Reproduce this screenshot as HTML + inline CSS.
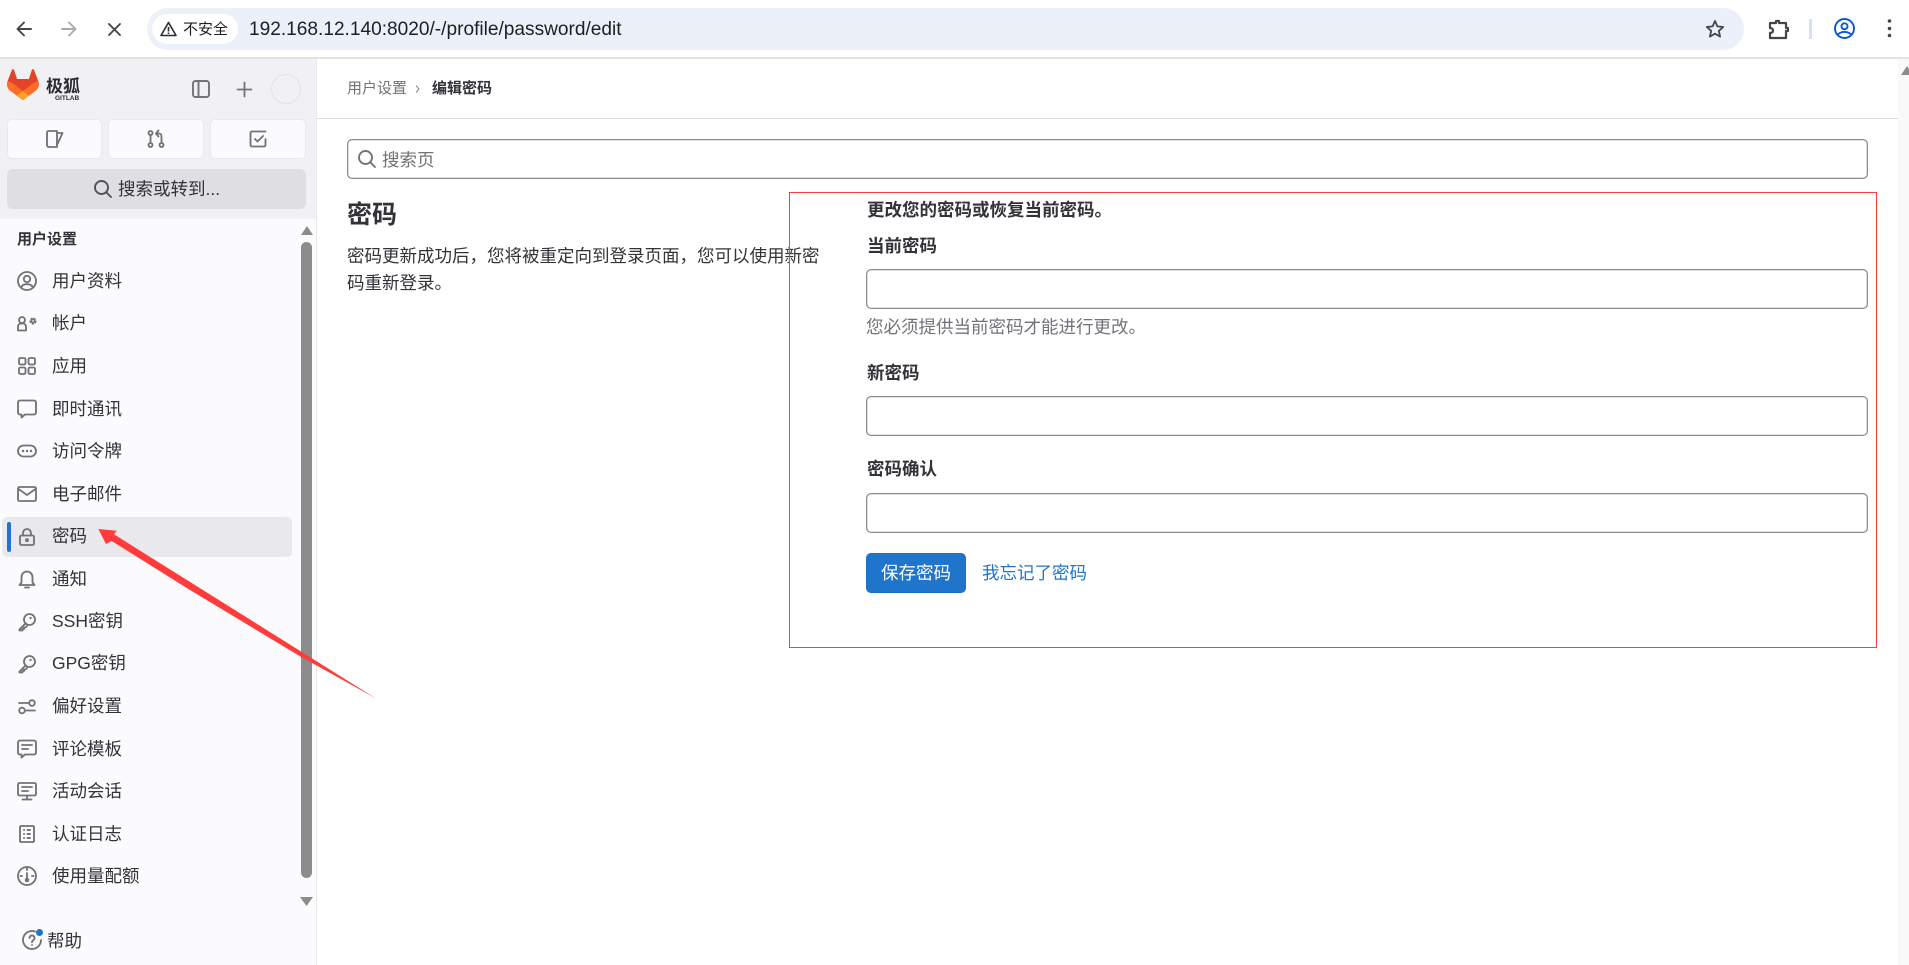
<!DOCTYPE html>
<html lang="zh"><head><meta charset="utf-8"><title>密码</title>
<style>
*{box-sizing:border-box}
html,body{margin:0;padding:0;width:1909px;height:965px;overflow:hidden;background:#fff}
body{font-family:"Liberation Sans","Noto Sans CJK SC",sans-serif;color:#333238;font-size:17.5px;position:relative}
.a{position:absolute}
.t{position:absolute;line-height:24px;height:24px;white-space:nowrap}
.b{font-weight:700}
svg{position:absolute;display:block;overflow:visible}
.ic{width:20px;height:20px;left:17px;fill:none;stroke:#737278;stroke-width:1.85;stroke-linecap:round;stroke-linejoin:round}
.tb{fill:none;stroke:#444746;stroke-width:1.9;stroke-linecap:round;stroke-linejoin:round}
.input{position:absolute;border-radius:5px;background:#fff;box-shadow:inset 0 0 0 1.3px #8c8b90}
.qb{position:absolute;top:119px;height:40px;background:#fbfafd;border:1px solid #e9e9ec;border-radius:5px}
</style></head><body>

<!-- browser toolbar -->
<div class="a" style="left:0;top:57px;width:1909px;height:2px;background:#e3e3e3"></div>
<svg class="tb" style="left:16px;top:21px;width:16px;height:16px" viewBox="0 0 16 16"><path d="M15 8H1.500M8 1.500 1.500 8 8 14.500"/></svg>
<svg class="tb" style="left:61px;top:21px;width:16px;height:16px;stroke:#a8abae" viewBox="0 0 16 16"><path d="M1 8h13.500M8 1.500 14.500 8 8 14.500"/></svg>
<svg class="tb" style="left:108px;top:23px;width:13px;height:13px" viewBox="0 0 13 13"><path d="M1 1l11 11M12 1 1 12"/></svg>
<div class="a" style="left:147px;top:8px;width:1597px;height:42px;border-radius:21px;background:#ebf0f9"></div>
<div class="a" style="left:152px;top:14px;width:86px;height:30px;border-radius:15px;background:#fff"></div>
<svg style="left:160px;top:21px;width:17px;height:16px;fill:none;stroke:#2b2b2b;stroke-width:1.6;stroke-linejoin:round" viewBox="0 0 17 16"><path d="M8.500 1.500 16 14.500H1z"/><path d="M8.500 6v4.500M8.500 11.500v1.500"/></svg>
<div class="t" style="left:183px;top:18px;font-size:15px;color:#1f1f1f">不安全</div>
<div class="t" style="left:249px;top:18px;font-size:19.1px;color:#1f1f1f">192.168.12.140:8020/-/profile/password/edit</div>
<svg style="left:1705px;top:19px;width:20px;height:20px;fill:none;stroke:#444746;stroke-width:1.8;stroke-linejoin:round" viewBox="0 0 20 20"><path d="M10 2l2.400 5.400 5.800.6-4.400 3.900 1.300 5.700L10 14.700l-5.100 2.900 1.300-5.700L1.800 8l5.800-.6z"/></svg>
<svg style="left:1768px;top:19px;width:21px;height:20px;fill:none;stroke:#444746;stroke-width:2.2;stroke-linejoin:round" viewBox="0 0 21 20"><path d="M2 4H8V2h3V4H18V9h2v3h-2V19H2V14c2.500 0 3-1.500 3-2.500S4.500 9 2 9Z"/></svg>
<div class="a" style="left:1809px;top:19px;width:3px;height:20px;background:#d3e3fd"></div>
<svg style="left:1834px;top:18px;width:21px;height:21px;fill:none;stroke:#0b57d0;stroke-width:1.9" viewBox="0 0 21 21"><circle cx="10.500" cy="10.500" r="9.500"/><circle cx="10.500" cy="8.300" r="3"/><path d="M3.800 16.500c2-2 4.300-2.600 6.700-2.600s4.700.6 6.700 2.600"/></svg>
<svg style="left:1886px;top:19px;width:7px;height:20px;fill:#444746" viewBox="0 0 7 20"><circle cx="3.500" cy="2" r="1.800"/><circle cx="3.500" cy="9.500" r="1.800"/><circle cx="3.500" cy="16.500" r="1.800"/></svg>

<!-- sidebar -->
<div class="a" style="left:0;top:59px;width:317px;height:906px;background:#fbfafd;border-right:1px solid #e8e8ea"></div>
<div class="a" style="left:0;top:59px;width:316px;height:160px;background:#f1f1f4"></div>
<svg style="left:7px;top:69px;width:32px;height:31px" viewBox="0 0 25 24"><path fill="#E24329" d="m24.507 9.500-.034-.09L21.082.562a.896.896 0 0 0-1.694.091l-2.290 7.010H7.825L5.535.653a.898.898 0 0 0-1.694-.09L.451 9.411.416 9.500a6.297 6.297 0 0 0 2.090 7.278l.012.01.03.022 5.160 3.867 2.560 1.935 1.554 1.176a1.051 1.051 0 0 0 1.268 0l1.555-1.176 2.560-1.935 5.197-3.890.014-.01A6.297 6.297 0 0 0 24.507 9.500Z"/><path fill="#FC6D26" d="m24.507 9.500-.034-.09a11.440 11.440 0 0 0-4.560 2.051l-7.447 5.632 4.742 3.584 5.197-3.890.014-.01A6.297 6.297 0 0 0 24.507 9.500Z"/><path fill="#FCA326" d="m7.707 20.677 2.560 1.935 1.555 1.176a1.051 1.051 0 0 0 1.268 0l1.555-1.176 2.560-1.935-4.743-3.584-4.755 3.584Z"/><path fill="#FC6D26" d="M5.010 11.461a11.430 11.430 0 0 0-4.560-2.050L.416 9.500a6.297 6.297 0 0 0 2.090 7.278l.012.01.03.022 5.160 3.867 4.745-3.584-7.444-5.632Z"/></svg>
<div class="t b" style="left:46px;top:75px;font-size:17px;color:#2b2b33">极狐</div>
<div class="t b" style="left:55px;top:87px;font-size:6.500px;color:#2b2b33">GITLAB</div>
<svg class="ic" style="left:192px;top:80px;width:18px;height:18px;stroke-width:1.9" viewBox="0 0 18 18"><rect x="1" y="1" width="16" height="16" rx="2.500"/><path d="M6.500 1v16"/></svg>
<svg class="ic" style="left:237px;top:82px;width:15px;height:15px;stroke-width:1.8" viewBox="0 0 15 15"><path d="M7.500 .5v14M.5 7.500h14"/></svg>
<div class="a" style="left:271px;top:74px;width:30px;height:30px;border-radius:50%;border:1px solid #e3e3e6;background:#f1f1f4"></div>
<div class="qb" style="left:7px;width:95px"></div>
<div class="qb" style="left:108px;width:96px"></div>
<div class="qb" style="left:210px;width:96px"></div>
<svg class="ic" style="left:45px;top:129px" viewBox="0 0 20 20"><path d="M2 3.500a1.500 1.500 0 0 1 1.500-1.500H12v16H4a2 2 0 0 1-2-2z"/><path d="M12 4h5.500L12 16"/></svg>
<svg class="ic" style="left:146px;top:129px" viewBox="0 0 20 20"><circle cx="4.500" cy="4" r="2"/><circle cx="4.500" cy="16" r="2"/><path d="M4.500 6v8"/><circle cx="15.500" cy="16" r="2"/><path d="M15.500 14V7a2.500 2.500 0 0 0-2.500-2.500h-2.500M12.500 1.500l-2.500 3 2.500 3"/></svg>
<svg class="ic" style="left:248px;top:129px" viewBox="0 0 20 20"><path d="M17.500 10v6a1.500 1.500 0 0 1-1.500 1.500H4A1.500 1.500 0 0 1 2.500 16V4A1.500 1.500 0 0 1 4 2.500h13.500"/><path d="M7 10l2.500 2.500L15 7"/></svg>
<div class="a" style="left:7px;top:169px;width:299px;height:40px;background:#dfdee3;border-radius:6px"></div>
<svg style="left:94px;top:180px;width:18px;height:18px;fill:none;stroke:#535158;stroke-width:1.9;stroke-linecap:round" viewBox="0 0 18 18"><circle cx="7.500" cy="7.500" r="6.500"/><path d="M12.500 12.500 17 17"/></svg>
<div class="t" style="left:118px;top:177px">搜索或转到...</div>

<div class="t b" style="left:17px;top:228px;font-size:15px">用户设置</div>

<div class="a" style="left:2px;top:517px;width:290px;height:40px;background:#e9e8ec;border-radius:5px"></div>
<div class="a" style="left:7px;top:522px;width:4px;height:30px;background:#1f75cb;border-radius:2px"></div>

<svg class="ic" style="top:271px" viewBox="0 0 20 20"><circle cx="10" cy="10" r="9"/><circle cx="10" cy="8" r="3.200"/><path d="M4.200 16.500c.8-2.500 3-3.300 5.800-3.300s5 .8 5.800 3.300"/></svg>
<div class="t" style="left:52px;top:269px">用户资料</div>
<svg class="ic" style="top:313px" viewBox="0 0 20 20"><circle cx="5" cy="7" r="3"/><path d="M1 17.500v-4a3 3 0 0 1 3-3h2a3 3 0 0 1 3 3v4z"/><circle cx="16" cy="8" r="2.500" fill="#737278" stroke-width="2.200" stroke-dasharray="2 1" stroke-linecap="butt"/><circle cx="16" cy="8" r=".9" fill="#fbfafd" stroke="none"/></svg>
<div class="t" style="left:52px;top:311px">帐户</div>
<svg class="ic" style="top:356px" viewBox="0 0 20 20"><rect x="2" y="2" width="6.500" height="6.500" rx="1.500"/><rect x="11.500" y="2" width="6.500" height="6.500" rx="1.500"/><rect x="2" y="11.500" width="6.500" height="6.500" rx="1.500"/><rect x="11.500" y="11.500" width="6.500" height="6.500" rx="1.500"/></svg>
<div class="t" style="left:52px;top:354px">应用</div>
<svg class="ic" style="top:399px" viewBox="0 0 20 20"><path d="M3 1.500h14a2 2 0 0 1 2 2v10a2 2 0 0 1-2 2H8l-3.500 3v-3H3a2 2 0 0 1-2-2v-10a2 2 0 0 1 2-2z"/></svg>
<div class="t" style="left:52px;top:397px">即时通讯</div>
<svg class="ic" style="top:441px" viewBox="0 0 20 20"><rect x="1" y="4.500" width="18" height="11" rx="5.500"/><path d="M6 10h.1M10 10h.1M14 10h.1" stroke-width="2.400"/></svg>
<div class="t" style="left:52px;top:439px">访问令牌</div>
<svg class="ic" style="top:484px" viewBox="0 0 20 20"><rect x="1" y="3" width="18" height="14" rx="1.500"/><path d="M1.500 5 10 11l8.500-6"/></svg>
<div class="t" style="left:52px;top:482px">电子邮件</div>
<svg class="ic" style="top:527px" viewBox="0 0 20 20"><rect x="3" y="8.500" width="14" height="9.500" rx="1.500"/><path d="M6 8.500V6a4 4 0 0 1 8 0v2.500"/><circle cx="10" cy="13.200" r="1" fill="#737278"/></svg>
<div class="t" style="left:52px;top:524px">密码</div>
<svg class="ic" style="top:569px" viewBox="0 0 20 20"><path d="M2.500 16h15l-2-2.500V8a5.500 5.500 0 0 0-11 0v5.500z"/><path d="M8 18.500h4"/></svg>
<div class="t" style="left:52px;top:567px">通知</div>
<svg class="ic" style="top:612px" viewBox="0 0 20 20"><circle cx="12.500" cy="7.500" r="5.500"/><path d="M8.500 11.500 2.500 17.500v1h3V17h1.500v-1.500h1.500l1.500-1.500"/><path d="M13.500 6h.1" stroke-width="2.200"/></svg>
<div class="t" style="left:52px;top:609px">SSH密钥</div>
<svg class="ic" style="top:654px" viewBox="0 0 20 20"><circle cx="12.500" cy="7.500" r="5.500"/><path d="M8.500 11.500 2.500 17.500v1h3V17h1.500v-1.500h1.500l1.500-1.500"/><path d="M13.500 6h.1" stroke-width="2.200"/></svg>
<div class="t" style="left:52px;top:651px">GPG密钥</div>
<svg class="ic" style="top:696px" viewBox="0 0 20 20"><path d="M2 7h10M9 14.500h9"/><circle cx="15" cy="7" r="2.800"/><circle cx="5" cy="14.500" r="2.800"/></svg>
<div class="t" style="left:52px;top:694px">偏好设置</div>
<svg class="ic" style="top:739px" viewBox="0 0 20 20"><path d="M3 1.500h14a2 2 0 0 1 2 2v10a2 2 0 0 1-2 2H8l-3.500 3v-3H3a2 2 0 0 1-2-2v-10a2 2 0 0 1 2-2z"/><path d="M5 6h10M5 10h6"/></svg>
<div class="t" style="left:52px;top:737px">评论模板</div>
<svg class="ic" style="top:781px" viewBox="0 0 20 20"><rect x="1" y="2" width="18" height="12.500" rx="1.500"/><path d="M5 6h10M5 10h6M10 14.500V18M5.500 18.500h9"/></svg>
<div class="t" style="left:52px;top:779px">活动会话</div>
<svg class="ic" style="top:824px" viewBox="0 0 20 20"><rect x="3" y="2" width="14" height="16" rx="1"/><path d="M7 6h.1M10.500 6H13M7 10h.1M10.500 10H13M7 14h.1M10.500 14H13" stroke-width="1.900"/></svg>
<div class="t" style="left:52px;top:822px">认证日志</div>
<svg class="ic" style="top:866px" viewBox="0 0 20 20"><circle cx="10" cy="10" r="9"/><path d="M10 1.500V4M3.500 10H5M16.500 10H15M10 7v6"/><circle cx="10" cy="14" r="1.300" fill="#737278"/></svg>
<div class="t" style="left:52px;top:864px">使用量配额</div>

<svg class="ic" style="left:22px;top:930px" viewBox="0 0 20 20"><path d="M13 1.500A9 9 0 1 0 19 10"/><path d="M7.500 8a2.500 2.500 0 1 1 4 2c-1 .7-1.500 1.200-1.500 2.200M10 15h.1"/></svg>
<div class="a" style="left:36px;top:929px;width:7px;height:7px;border-radius:50%;background:#1f75cb"></div>
<div class="t" style="left:47px;top:929px">帮助</div>

<!-- sidebar scrollbar -->
<div class="a" style="left:301px;top:242px;width:11px;height:636px;background:#8c8c8c;border-radius:5.500px"></div>
<svg style="left:301px;top:226px;width:12px;height:9px;fill:#8c8c8c" viewBox="0 0 12 9"><path d="M6 0l6 9H0z"/></svg>
<svg style="left:300px;top:897px;width:13px;height:9px;fill:#8c8c8c" viewBox="0 0 13 9"><path d="M0 0h13L6.500 9z"/></svg>

<!-- top bar -->
<div class="a" style="left:317px;top:118px;width:1581px;height:1px;background:#dcdcde"></div>
<div class="a" style="left:1898px;top:59px;width:11px;height:906px;background:#f9f9f9"></div>
<svg style="left:1901px;top:66px;width:8px;height:9px;fill:#8c8c8c;overflow:hidden" viewBox="0 0 8 9"><path d="M6 0l6 9H0z"/></svg>
<div class="t" style="left:347px;top:77px;font-size:15px;color:#737278">用户设置</div>
<svg style="left:415px;top:85px;width:5px;height:8px;fill:none;stroke:#89888d;stroke-width:1" viewBox="0 0 5 8"><path d="M1 .5l3 3.500-3 3.500"/></svg>
<div class="t b" style="left:432px;top:77px;font-size:15px">编辑密码</div>

<!-- search -->
<div class="input" style="left:347px;top:139px;width:1521px;height:40px"></div>
<svg style="left:358px;top:150px;width:18px;height:18px;fill:none;stroke:#737278;stroke-width:1.9;stroke-linecap:round" viewBox="0 0 18 18"><circle cx="7.500" cy="7.500" r="6.500"/><path d="M12.500 12.500 17 17"/></svg>
<div class="t" style="left:382px;top:148px;color:#737278">搜索页</div>

<!-- left column -->
<div class="t b" style="left:347px;top:203px;font-size:25px;line-height:25px;height:25px">密码</div>
<div class="a" style="left:347px;top:243px;width:480px;line-height:26.500px">密码更新成功后，您将被重定向到登录页面，您可以使用新密码重新登录。</div>

<!-- form -->
<div class="t b" style="left:867px;top:198px">更改您的密码或恢复当前密码。</div>
<div class="t b" style="left:867px;top:234px">当前密码</div>
<div class="input" style="left:866px;top:269px;width:1002px;height:40px"></div>
<div class="t" style="left:866px;top:315px;color:#737278">您必须提供当前密码才能进行更改。</div>
<div class="t b" style="left:867px;top:361px">新密码</div>
<div class="input" style="left:866px;top:396px;width:1002px;height:40px"></div>
<div class="t b" style="left:867px;top:457px">密码确认</div>
<div class="input" style="left:866px;top:493px;width:1002px;height:40px"></div>
<div class="a" style="left:866px;top:553px;width:100px;height:40px;background:#1f75cb;border:1px solid #1a6fc5;border-radius:5px;color:#fff;text-align:center;line-height:38px">保存密码</div>
<div class="t" style="left:982px;top:561px;color:#1f75cb">我忘记了密码</div>

<!-- annotations -->
<div class="a" style="left:789px;top:192px;width:1088px;height:456px;border:1px solid #ff3b3b"></div>
<svg style="left:0;top:0;width:1909px;height:965px;pointer-events:none" viewBox="0 0 1909 965"><path fill="#ff3b3b" d="M98.300 529 116.700 530.700 114 534.300 376 698.500 300 656.300 190 590 111.700 541 106 544z"/></svg>
</body></html>
